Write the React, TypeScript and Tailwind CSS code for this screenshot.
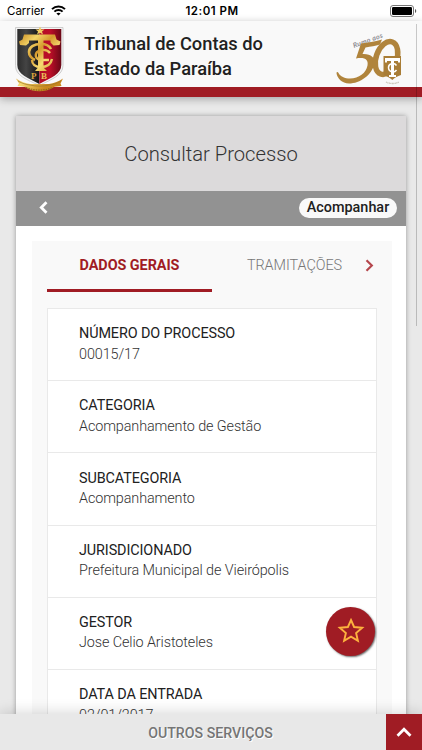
const fields = [
  { label: "NÚMERO DO PROCESSO", value: "00015/17" },
  { label: "CATEGORIA", value: "Acompanhamento de Gestão" },
  { label: "SUBCATEGORIA", value: "Acompanhamento" },
  { label: "JURISDICIONADO", value: "Prefeitura Municipal de Vieirópolis" },
  { label: "GESTOR", value: "Jose Celio Aristoteles" },
  { label: "DATA DA ENTRADA", value: "02/01/2017" },
];

function StatusBar() {
  return (
    <div className="h-[21px] shrink-0 bg-white flex items-center justify-between pl-[7px] pr-[5px] font-['Inter','Liberation_Sans',sans-serif] text-black">
      <div className="flex-1 flex items-center gap-[6px]">
        <span className="text-[11.5px] leading-[13px] pt-px">Carrier</span>
        <svg width="15" height="11" viewBox="0 0 15 11" fill="none" stroke="#000" strokeWidth="2">
          <path d="M1 4.1C4.6.6 10.4.6 14 4.1" />
          <path d="M3.4 6.6c2.3-2.2 5.9-2.2 8.2 0" />
          <path d="M7.5 10.6 5.4 8.5c1.2-1.1 3-1.1 4.2 0z" fill="#000" stroke="none" />
        </svg>
      </div>
      <span className="text-[11.5px] leading-[13px] pt-px font-semibold tracking-[0.5px]">12:01 PM</span>
      <div className="flex-1 flex justify-end">
        <svg width="27" height="12" viewBox="0 0 27 12">
          <rect x=".5" y=".5" width="23" height="11" rx="2.5" fill="none" stroke="#777" />
          <rect x="2" y="2" width="20" height="8" rx="1.2" fill="#000" />
          <path d="M25 4c1.7.7 1.7 3.3 0 4z" fill="#555" />
        </svg>
      </div>
    </div>
  );
}

function Crest() {
  return (
    <svg width="50" height="68" viewBox="0 0 50 68" className="block">
      <defs>
        <linearGradient id="gold" gradientUnits="userSpaceOnUse" x1="4" y1="8" x2="44" y2="48">
          <stop offset="0" stopColor="#c98c22" />
          <stop offset=".25" stopColor="#f3d468" />
          <stop offset=".45" stopColor="#d59a2e" />
          <stop offset=".65" stopColor="#f6da72" />
          <stop offset="1" stopColor="#c8871c" />
        </linearGradient>
        <linearGradient id="black" x1="0" y1="0" x2="1" y2="0">
          <stop offset="0" stopColor="#2c2c2c" />
          <stop offset=".4" stopColor="#444" />
          <stop offset="1" stopColor="#151515" />
        </linearGradient>
        <linearGradient id="red" x1="0" y1="0" x2="1" y2="0">
          <stop offset="0" stopColor="#b30d26" />
          <stop offset=".5" stopColor="#bb0e28" />
          <stop offset="1" stopColor="#680816" />
        </linearGradient>
      </defs>
      <path d="M.5 1.500h47.500v38c0 10-12 14-23.700 20C12 53.500.5 50 .5 39.500z" fill="#f4f4f4" stroke="#c4c4c4" strokeWidth=".8" />
      <path d="M2.300 3h22v55C13 52 2.300 48 2.300 39z" fill="url(#black)" />
      <path d="M24.300 3h22v36c0 9-10.700 13-22 19z" fill="url(#red)" />
      <path d="m25 .5 1.200 3h3.300l-2.500 2 1 3-3-1.800-3 1.800 1-3-2.500-2h3.300z" fill="#f1cc62" />
      {/* T */}
      <path d="M9 8.500h31l1.500 5 4 2-1 3.500-6 .5-3-3V14.500h-7v27l3.500 3.500h-12l3-3.500v-27h-9V17L11 19.500l-6-.5-1-3.500 3.500-2z" fill="url(#gold)" />
      {/* C and E wound around the stem */}
      <path d="M36 23c-2-4-6-5-10-5-7 0-12 3-12 8 0 4 2 6 6 8" fill="none" stroke="url(#gold)" strokeWidth="2.600" />
      <path d="M35 27c-3-4-10-4-13-1-3 4 0 8 4 8h8M37 33c-1 5-5 8-11 8s-9-3-9-7" fill="none" stroke="url(#gold)" strokeWidth="2.400" />
      <text x="16" y="53" fontSize="9" fontWeight="700" fill="#d9a53e" fontFamily="Liberation Serif, serif">P</text>
      <text x="26" y="53" fontSize="9" fontWeight="700" fill="#eac05a" fontFamily="Liberation Serif, serif">B</text>
      <path d="M1 52.500c4 3 9 4.500 14 5.500h19c5-1 10-2.500 14-5.500l-2.500 5 1 2.500-7 .8c-9 6-21 6-30 0l-7-.8 1.500-2.500z" fill="url(#gold)" />
      <path d="M3 55c4 2.500 8 3.500 12 4 6 1.500 13 1.500 19 0 4-.5 8-1.500 12-4" fill="none" stroke="#9b7528" strokeWidth=".7" />
      <path d="M11 61.500c9 3.500 18 3.500 27 0" fill="none" stroke="#8a651c" strokeWidth="1.200" strokeDasharray="1.5 1" />
    </svg>
  );
}

function AnniversaryLogo() {
  return (
    <svg width="68" height="54" viewBox="0 0 68 54" className="block">
      <text x="18" y="17" transform="rotate(-20 18 17)" fontSize="7" fontWeight="700" fontStyle="italic" textLength="31" fill="#8b8b92" fontFamily="Lato, sans-serif">Rumo aos</text>
      {/* 5 with its swash */}
      <path d="M25 12.500c7-1 13-1.500 21-4l-2 5c-5 1.500-9 2-14.500 3l-3 6.500c8-.5 13 3.500 12 9.500C36 44 24 52.500 13 52.500 6 52.500 1 47 .5 42c0-1.500 1.500-1.500 2 0C4 45.500 9 47.500 14 47.500c9 0 16-5.500 17.500-13C32.500 28.500 29 26 20 27.500z" fill="#b0843c" />
      {/* 0 */}
      <ellipse cx="50.500" cy="27" rx="10.300" ry="17" transform="rotate(20 50.500 27)" fill="none" stroke="#b0843c" strokeWidth="5.500" />
      <path d="M47.500 25h17.500v19c-3.500 1.500-6 2-8.700 5-3-3-5.500-3.500-8.800-5z" fill="#a97d36" />
      <path d="M49 27h15v4.500h-2V30h-4v14h2v2h-7v-2h2V30h-4v1.500h-2z" fill="#fff" />
      <path d="M60.500 34.500c-2-3-8-2.500-8 2 0 5 6 5.500 8 2.500" fill="none" stroke="#fff" strokeWidth="1.500" />
      <path d="M50 51c4 2 9 2 13 0" fill="none" stroke="#c5bfb1" strokeWidth="1.300" strokeDasharray="1 .5" />
    </svg>
  );
}

function Header() {
  return (
    <header className="relative z-10 h-[76px] shrink-0 bg-[#f9f9f9] border-b-[10px] border-[#a01c24] shadow-[0_2px_8px_rgba(0,0,0,0.3)] flex items-start pl-[15px] pr-[18px]">
      <div className="mt-[5px]">
        <Crest />
      </div>
      <h1 className="ml-[19px] mt-[10px] flex-1 text-[18.3px] leading-[25px] font-medium text-[#212121]">
        Tribunal de Contas do
        <br />
        Estado da Paraíba
      </h1>
      <div className="mt-[10px]">
        <AnniversaryLogo />
      </div>
    </header>
  );
}

function Tabs() {
  return (
    <div className="flex h-[52px] text-[14.4px] tracking-[-0.05px]">
      <button className="w-[165px] h-[51px] border-b-[3px] border-[#a01c24] text-[#a01c24] font-bold leading-[48px] pt-px">
        DADOS GERAIS
      </button>
      <button className="w-[165px] h-[49px] text-[#777] font-light leading-[48px] pt-px">TRAMITAÇÕES</button>
      <svg width="9" height="13" viewBox="0 0 9 13" className="-ml-[12px] mt-[18px]" fill="none" stroke="#b5474d" strokeWidth="2.200">
        <path d="m1.500 1.300 5.300 5.200-5.300 5.200" />
      </svg>
    </div>
  );
}

export default function App() {
  return (
    <div className="relative w-[422px] h-[750px] overflow-hidden bg-[#e9e9e9] flex flex-col font-['Roboto',sans-serif]">
      <StatusBar />
      <Header />

      <main className="flex-1 min-h-0 px-[16px] pt-[19px]">
        <section className="h-[700px] bg-white shadow-[0_0_5px_rgba(0,0,0,0.35)]">
          <h2 className="h-[75px] pt-[2px] bg-[#dcdadb] flex items-center justify-center text-[20.2px] font-light text-[#333]">
            Consultar Processo
          </h2>
          <div className="h-[35px] bg-[#929292] flex items-center justify-between pl-[23px] pr-[9px]">
            <svg width="9" height="13" viewBox="0 0 9 13" className="-mt-[2px]" fill="none" stroke="#fff" strokeWidth="2.800">
              <path d="M7.500 1.300 2.300 6.500l5.200 5.200" />
            </svg>
            <button className="h-[20px] w-[98px] rounded-full bg-[#f9f9f9] text-[14.4px] leading-[18px] font-medium text-[#212121] -mt-px">
              Acompanhar
            </button>
          </div>

          <div className="mt-[15px] ml-[16px] px-[15px] h-[600px] w-[360px] bg-[#f9f9f9]">
            <Tabs />
            <ul className="mt-[15px] w-[330px] bg-white border border-[#e9e9e9]">
              {fields.map((f) => (
                <li
                  key={f.label}
                  className="h-[72.2px] pt-[15.3px] pl-[31px] border-b border-[#e9e9e9] text-[14.4px] leading-[20.4px] tracking-[-0.1px]"
                >
                  <p className="text-[#212121]">{f.label}</p>
                  <p className="font-light text-[#333]">{f.value}</p>
                </li>
              ))}
            </ul>
          </div>
        </section>
      </main>

      {/* scroll indicator */}
      <div className="absolute z-20 left-[416px] top-[24px] w-px h-[302px] bg-black/20" />

      <button className="absolute left-[326px] top-[607px] size-[49px] rounded-full bg-[#a01c24] shadow-[1px_1px_2px_rgba(0,0,0,0.6)] flex items-center justify-center">
        <svg width="28" height="27" viewBox="0 0 28 27" className="-mt-[3px]" fill="none" stroke="#fdb23e" strokeWidth="1.900">
          <path d="m14 3 3.100 7 8.100.7-6.100 5.300 1.800 7.800-6.900-4.200-6.900 4.200 1.800-7.800-6.100-5.300 8.100-.7z" />
        </svg>
      </button>

      <footer className="absolute bottom-0 left-0 w-full h-[36px] bg-[#e8e8e8] shadow-[0_-2px_14px_rgba(0,0,0,0.15)] flex">
        <span className="flex-1 pl-[35px] text-center text-[14.2px] leading-[38px] font-medium text-[#757575] [text-shadow:1px_1px_0_#fff]">
          OUTROS SERVIÇOS
        </span>
        <button className="w-[36px] bg-[#a01c24] flex items-center justify-center">
          <svg width="16" height="10" viewBox="0 0 16 10" className="-mt-px" fill="none" stroke="#fff" strokeWidth="2.800">
            <path d="M1.500 8.700 8 2.200l6.500 6.500" />
          </svg>
        </button>
      </footer>
    </div>
  );
}
